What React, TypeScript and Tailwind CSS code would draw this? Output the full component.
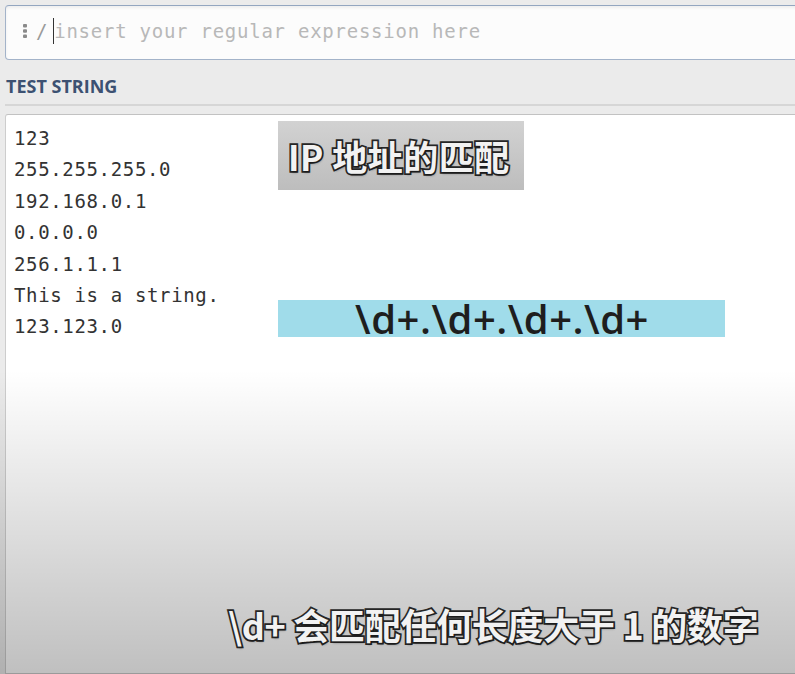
const LINES = [
	"123",
	"255.255.255.0",
	"192.168.0.1",
	"0.0.0.0",
	"256.1.1.1",
	"This is a string.",
	"123.123.0",
];

const mono = "font-['DejaVu_Sans_Mono','Liberation_Mono',monospace]";
const cjk = "font-['Noto_Sans_CJK_SC','Noto_Sans',sans-serif]";
const outline =
	"text-[#f2f2f2] [-webkit-text-stroke:3.5px_#262626] [paint-order:stroke_fill] [text-shadow:1px_2px_2px_rgba(0,0,0,0.3)]";

const App = () => {
	return (
		<div className="relative w-[795px] h-[674px] overflow-hidden bg-[#ebebeb] pl-[5px] pt-[5px] flex flex-col">
			{/* regex input */}
			<div className="h-[55px] -mr-4 flex items-center pl-[16px] pb-[3px] bg-[#fcfcfc] border border-[#a3b3c9] border-t-[#93a6c0] rounded-l-[4px] shadow-[inset_0_2px_3px_rgba(0,0,0,0.06)]">
				<svg width="6" height="16" viewBox="0 0 6 16" className="text-[#8a8a8a]">
					<rect x="1" y="1" width="4" height="3.5" rx="1" fill="currentColor" />
					<rect x="1" y="6.3" width="4" height="3.5" rx="1" fill="currentColor" />
					<rect x="1" y="11.6" width="4" height="3.5" rx="1" fill="currentColor" />
				</svg>
				<span className={`${mono} text-[19px] tracking-[0.75px] text-[#9a9a9a] ml-[8px]`}>/</span>
				<span className="w-px h-[26px] bg-[#333] ml-[5px]" />
				<span className={`${mono} text-[19px] tracking-[0.75px] text-[#b8b8b8]`}>
					insert your regular expression here
				</span>
			</div>

			{/* section title */}
			<div className="mt-[13px] pb-[5px] border-b-2 border-[#d6d6d6] -mr-4">
				<h2 className="font-['Open_Sans',sans-serif] font-bold text-[18px] leading-[25px] text-[#3c5172] pl-[1px] pt-[1px]">
					TEST STRING
				</h2>
			</div>

			{/* test string box */}
			<div className="mt-[8px] flex-1 -mr-4 bg-white border border-[#cdcdcd] border-t-[#c2c2c2] rounded-tl-[3px] pt-[8px] pl-[8px]">
				{LINES.map((line) => (
					<div
						key={line}
						className={`${mono} text-[19px] tracking-[0.65px] leading-[31.4px] text-[#333]`}
					>
						{line}
					</div>
				))}
			</div>

			{/* video vignette */}
			<div className="absolute left-0 right-0 top-[370px] bottom-0 bg-gradient-to-b from-transparent to-black/25 pointer-events-none" />

			{/* captions */}
			<div className="absolute left-[278px] top-[121px] w-[246px] h-[69px] bg-gradient-to-b from-[#d2d2d2] to-[#bdbdbd] flex items-center pl-[10px]">
				<span className={`${cjk} font-bold text-[35px] leading-none tracking-[0.5px] ${outline}`}>
					IP 地址的匹配
				</span>
			</div>

			<div className="absolute left-[278px] top-[300px] w-[447px] h-[37px] bg-[#a0dcea] flex items-center justify-center pl-[1px]">
				<span className="font-['Open_Sans',sans-serif] font-semibold text-[40px] leading-[37px] text-[#1e1e1e] tracking-[0.5px]">
					\d+.\d+.\d+.\d+
				</span>
			</div>

			<div className="absolute left-[228px] top-[599px]">
				<span className={`${cjk} font-bold text-[36px] leading-[50px] tracking-[-0.3px] ${outline}`}>
					\d+ 会匹配任何长度大于 1 的数字
				</span>
			</div>
		</div>
	);
};

export default App;
